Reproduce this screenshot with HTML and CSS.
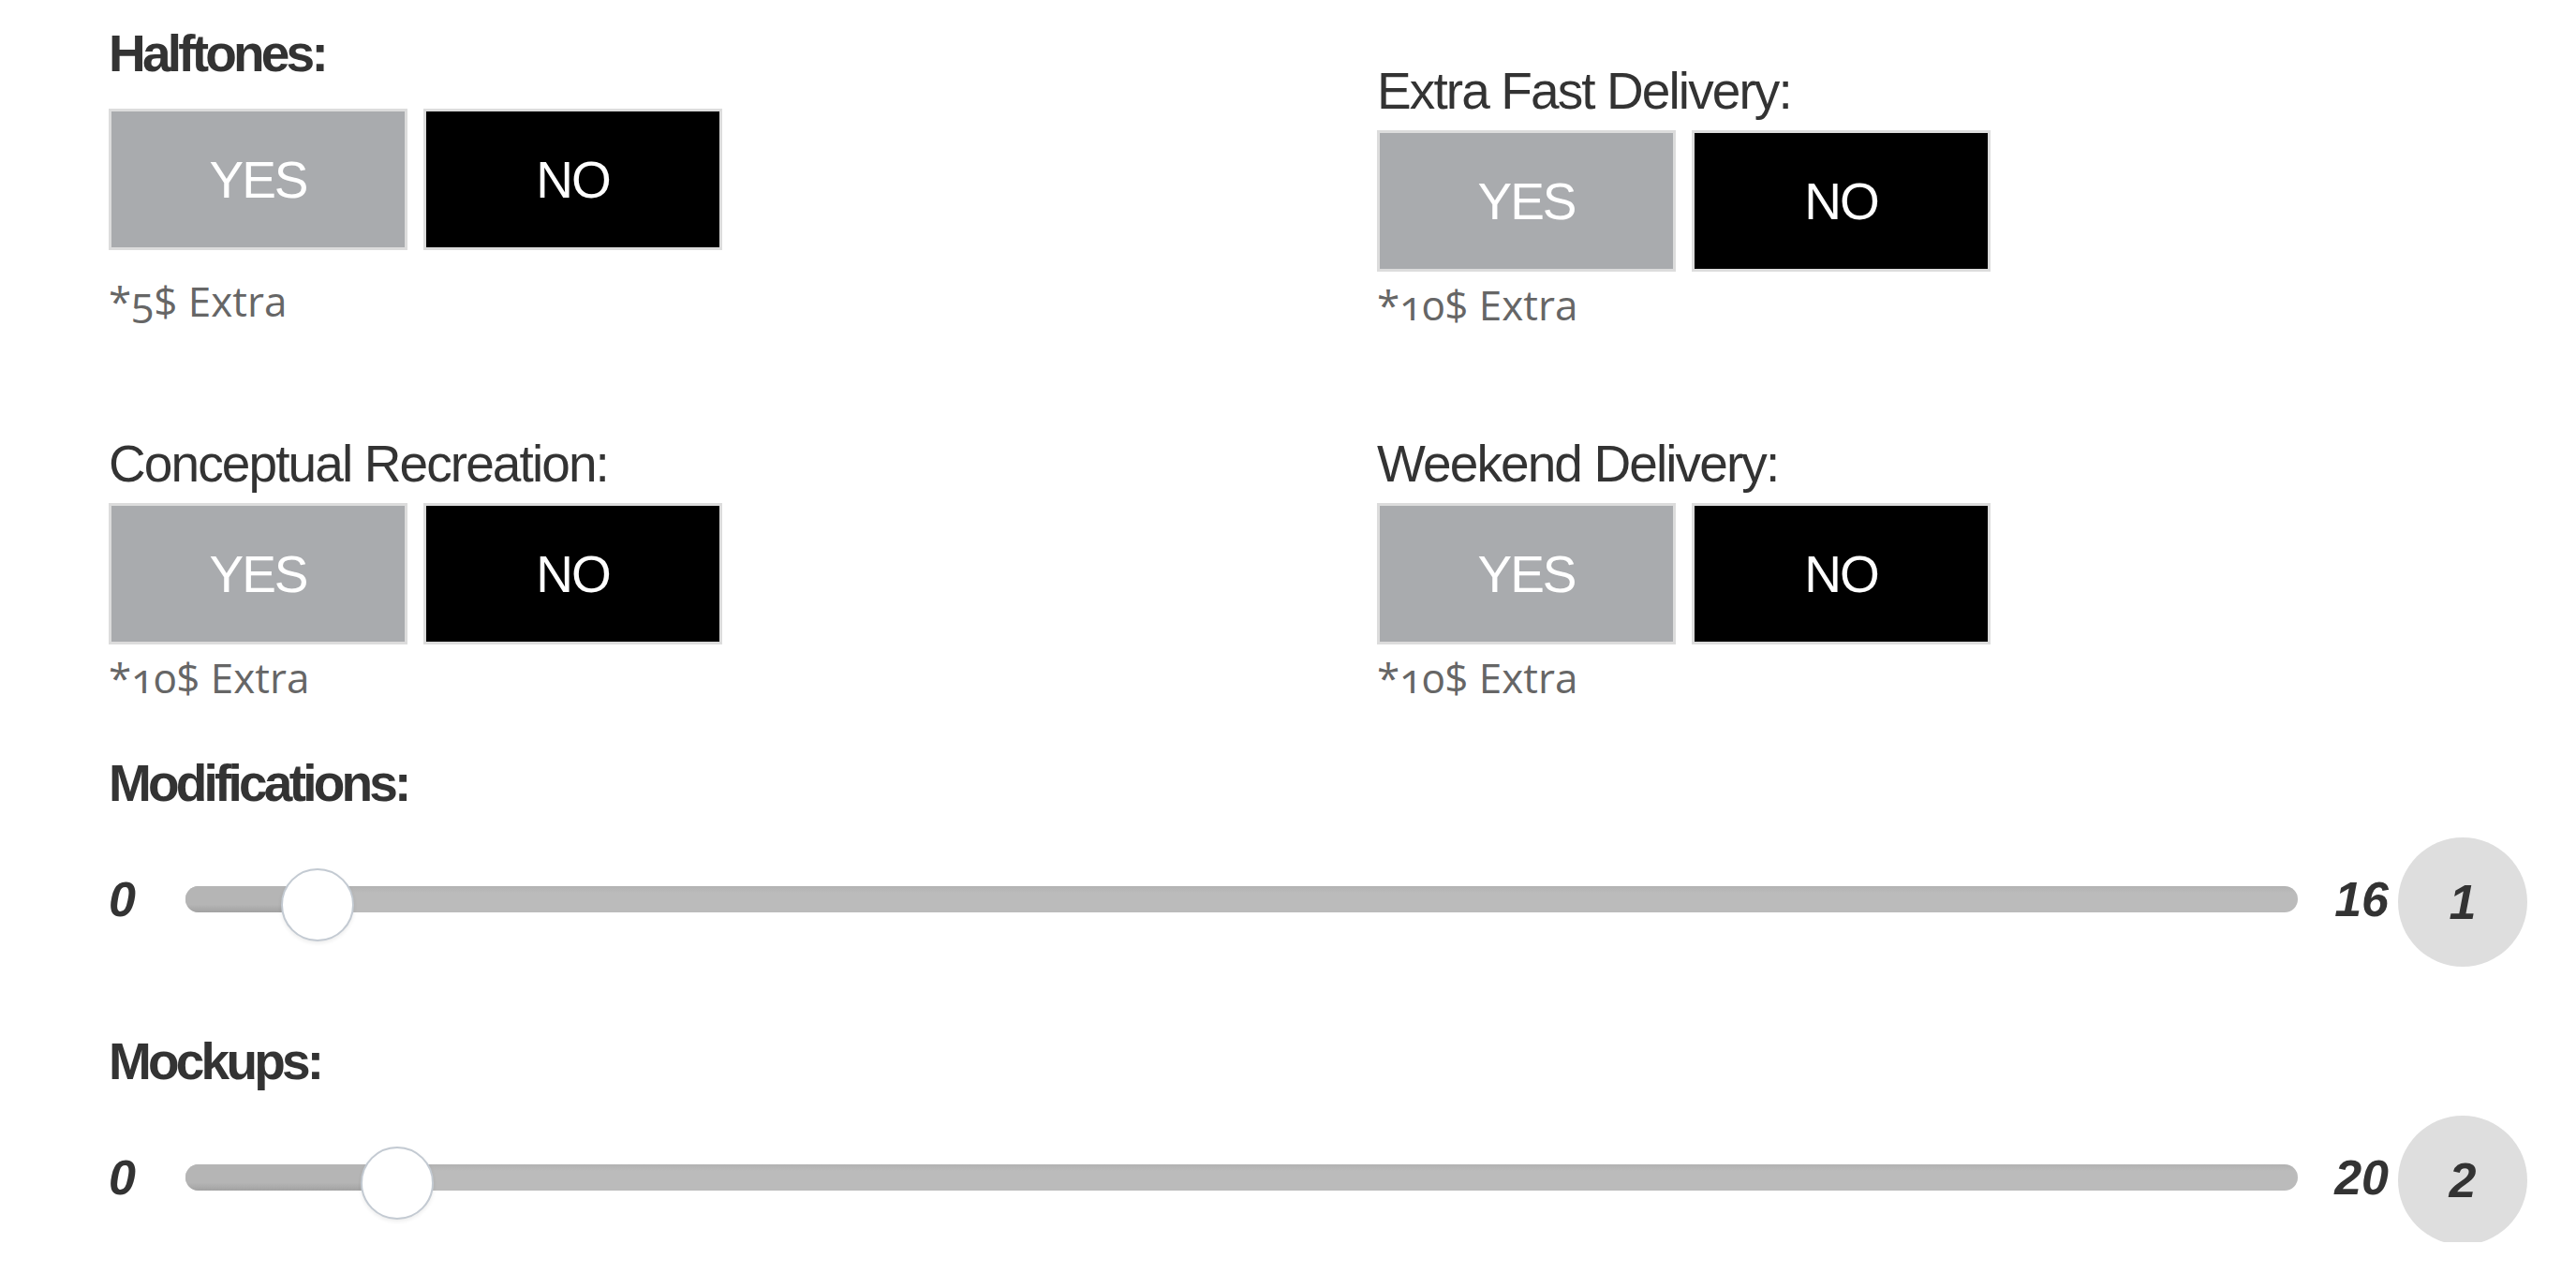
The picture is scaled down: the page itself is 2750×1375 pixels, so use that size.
FILE: index.html
```
<!DOCTYPE html>
<html lang="en">
<head>
  <meta charset="UTF-8" />
  <meta name="viewport" content="width=device-width, initial-scale=1.0" />
  <title>Order Options</title>
  <link rel="stylesheet" href="styles.css">
</head>
<body>
  <div class="page">
    <div class="options">
      <div class="option option-strong">
        <div class="label label-strong">Halftones:</div>
        <div class="choice">
          <button class="btn btn-yes">YES</button>
          <button class="btn btn-no">NO</button>
        </div>
        <div class="note">*5$ Extra</div>
      </div>

      <div class="option option-offset">
        <div class="label">Extra Fast Delivery:</div>
        <div class="choice">
          <button class="btn btn-yes">YES</button>
          <button class="btn btn-no">NO</button>
        </div>
        <div class="note">*10$ Extra</div>
      </div>

      <div class="option">
        <div class="label">Conceptual Recreation:</div>
        <div class="choice">
          <button class="btn btn-yes">YES</button>
          <button class="btn btn-no">NO</button>
        </div>
        <div class="note">*10$ Extra</div>
      </div>

      <div class="option">
        <div class="label">Weekend Delivery:</div>
        <div class="choice">
          <button class="btn btn-yes">YES</button>
          <button class="btn btn-no">NO</button>
        </div>
        <div class="note">*10$ Extra</div>
      </div>
    </div>

    <div class="slider-group">
      <div class="label label-strong">Modifications:</div>
      <div class="slider">
        <span class="slider-min">0</span>
        <div class="track">
          <div class="fill" style="width: 6.25%"></div>
          <div class="thumb" style="left: 6.25%"></div>
        </div>
        <span class="slider-max">16</span>
        <span class="slider-value">1</span>
      </div>
    </div>

    <div class="slider-group slider-group-last">
      <div class="label label-strong">Mockups:</div>
      <div class="slider">
        <span class="slider-min">0</span>
        <div class="track">
          <div class="fill" style="width: 10%"></div>
          <div class="thumb" style="left: 10%"></div>
        </div>
        <span class="slider-max">20</span>
        <span class="slider-value">2</span>
      </div>
    </div>
  </div>
</body>
</html>
```

FILE: styles.css
```
body {
  margin: 0;
  background-color: #fff;
  color: #333;
  font-family: "Liberation Sans", Arial, sans-serif;
}
.page {
  padding: 28px 52px 0 116px;
}
.options {
  display: grid;
  grid-template-columns: 1354px 1fr;
  row-gap: 116px;
  align-items: start;
}
.option-offset {
  margin-top: 40px;
}
.label {
  font-size: 55px;
  line-height: 58px;
  letter-spacing: -1.9px;
  color: #333;
  margin-bottom: 13px;
}
.label-strong {
  font-weight: bold;
  letter-spacing: -3.8px;
  margin-bottom: 30px;
}
.choice {
  display: flex;
  gap: 17px;
}
.btn {
  width: 319px;
  height: 151px;
  margin: 0;
  padding: 0;
  border: 3px solid #dcdcdc;
  font-family: inherit;
  font-size: 55px;
  letter-spacing: -2px;
  color: #fff;
  cursor: pointer;
}
.btn-yes {
  background-color: #a9abae;
}
.btn-no {
  background-color: #000;
}
.note {
  font-family: "Open Sans", "Liberation Sans", sans-serif;
  font-variant-numeric: oldstyle-nums;
  font-size: 44px;
  line-height: 50px;
  color: #666;
  margin-top: 10px;
}
.option-strong .note {
  margin-top: 29px;
}
.slider-group {
  margin-top: 59px;
}
.slider-group-last {
  margin-top: 75px;
}
.slider-group .label {
  margin-bottom: 26px;
}
.slider {
  display: flex;
  align-items: center;
  height: 138px;
}
.slider-min, .slider-max, .slider-value {
  font-weight: bold;
  font-style: italic;
  font-size: 52px;
  line-height: 1;
  color: #333;
}
.slider-min {
  width: 82px;
}
.track {
  flex: 1;
  position: relative;
  height: 28px;
  border-radius: 14px;
  background: linear-gradient(#b2b2b2, #bbbbbb 25%);
}
.fill {
  position: absolute;
  left: 0;
  top: 0;
  bottom: 0;
  border-radius: 14px 0 0 14px;
  background: linear-gradient(#b5b5b5 70%, #a2a2a2);
}
.thumb {
  position: absolute;
  top: 50%;
  width: 74px;
  height: 74px;
  border: 2px solid #c3cad2;
  border-radius: 50%;
  background-color: #fff;
  box-shadow: 0 2px 4px rgba(0, 0, 0, 0.08);
  transform: translate(-50%, calc(-50% + 6px));
}
.slider-max {
  width: 107px;
  padding-right: 10px;
  box-sizing: border-box;
  text-align: right;
}
.slider-value {
  width: 138px;
  height: 138px;
  margin-top: 6px;
  border-radius: 50%;
  background-color: #dedede;
  display: flex;
  align-items: center;
  justify-content: center;
}
```
